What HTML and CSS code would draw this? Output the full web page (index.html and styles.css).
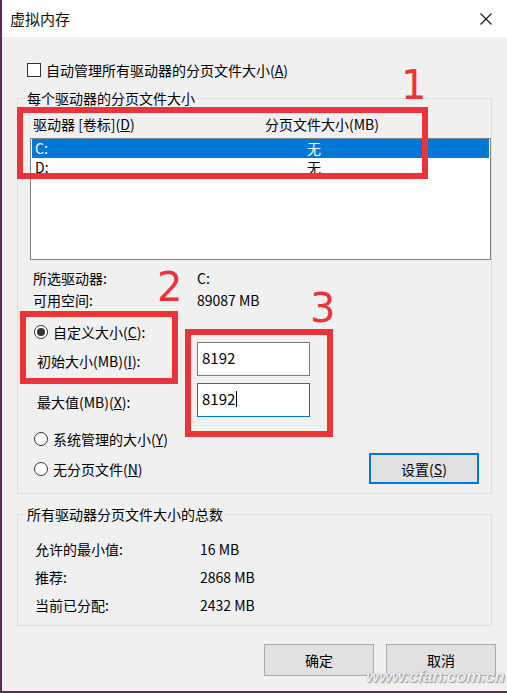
FILE: index.html
```html
<!DOCTYPE html>
<html lang="zh-CN">
<head>
    <meta charset="UTF-8">
    <meta name="viewport" content="width=device-width, initial-scale=1.0">
    <title>虚拟内存</title>
    <link rel="stylesheet" href="styles.css">
</head>
<body>
    <div class="window">
        <div class="titlebar">
            <span class="title">虚拟内存</span>
            <svg class="close" width="12" height="12" viewBox="0 0 12 12">
                <path d="M0.5 0.5 L11.5 11.5 M11.5 0.5 L0.5 11.5" stroke="#111" stroke-width="1.1" fill="none"/>
            </svg>
        </div>

        <label class="check-row"><span class="checkbox"></span>自动管理所有驱动器的分页文件大小(<u>A</u>)</label>

        <fieldset class="group">
            <legend>每个驱动器的分页文件大小</legend>
            <div class="group-inner drives-inner">
                <div class="list-head">
                    <span class="head-drive">驱动器 [卷标](<u>D</u>)</span>
                    <span>分页文件大小(MB)</span>
                </div>
                <div class="listbox">
                    <div class="list-row selected"><span class="row-drive">C:</span><span>无</span></div>
                    <div class="list-row"><span class="row-drive">D:</span><span>无</span></div>
                </div>

                <div class="drive-info">
                    <div class="info-row"><span class="info-label">所选驱动器:</span><span>C:</span></div>
                    <div class="info-row"><span class="info-label">可用空间:</span><span>89087 MB</span></div>
                </div>

                <div class="radio-row first-radio"><span class="radio checked"></span>自定义大小(<u>C</u>):</div>
                <div class="size-grid">
                    <span class="size-label">初始大小(MB)(<u>I</u>):</span>
                    <div class="textbox">8192</div>
                    <span class="size-label">最大值(MB)(<u>X</u>):</span>
                    <div class="textbox focused">8192<span class="caret"></span></div>
                </div>
                <div class="radio-row system-radio"><span class="radio"></span>系统管理的大小(<u>Y</u>)</div>
                <div class="last-row">
                    <div class="radio-row"><span class="radio"></span>无分页文件(<u>N</u>)</div>
                    <button class="btn btn-set">设置(<u>S</u>)</button>
                </div>
            </div>
        </fieldset>

        <fieldset class="group totals">
            <legend>所有驱动器分页文件大小的总数</legend>
            <div class="group-inner totals-inner">
                <div class="total-row"><span class="total-label">允许的最小值:</span><span>16 MB</span></div>
                <div class="total-row"><span class="total-label">推荐:</span><span>2868 MB</span></div>
                <div class="total-row"><span class="total-label">当前已分配:</span><span>2432 MB</span></div>
            </div>
        </fieldset>

        <div class="dialog-buttons">
            <button class="btn">确定</button>
            <button class="btn">取消</button>
        </div>
    </div>

    <!-- annotations drawn over the screenshot -->
    <div class="mark mark-1"></div>
    <div class="mark mark-2"></div>
    <div class="mark mark-3"></div>
    <span class="mark-num num-1">1</span>
    <span class="mark-num num-2">2</span>
    <span class="mark-num num-3">3</span>
    <span class="watermark">www.cfan.com.cn</span>
</body>
</html>
```

FILE: styles.css
```css
body {
    margin: 0;
    position: relative;
    width: 507px;
    height: 693px;
    overflow: hidden;
    font-family: "Noto Sans CJK SC", "Noto Sans", sans-serif;
    font-size: 14px;
    color: #000000;
}

.window {
    box-sizing: border-box;
    width: 507px;
    height: 693px;
    background-color: #f0f0f0;
    border-left: 2px solid #5b2b5c;
    border-bottom: 2px solid #5b2b5c;
}

.titlebar {
    height: 37px;
    background-color: #ffffff;
    display: flex;
    align-items: center;
    justify-content: space-between;
    padding: 0 15px 0 8px;
}

.title {
    font-size: 15px;
    line-height: 20px;
    color: #111111;
}

u {
    text-underline-offset: 1px;
}

.check-row {
    display: flex;
    align-items: center;
    height: 20px;
    line-height: 20px;
    margin: 23px 0 0 25px;
}

.checkbox {
    box-sizing: border-box;
    width: 14px;
    height: 14px;
    border: 1px solid #333333;
    background-color: #ffffff;
    margin-right: 5px;
}

.group {
    box-sizing: border-box;
    width: 475px;
    min-width: 0;
    margin: 9px 0 0 15px;
    padding: 0;
    border: 1px solid #dcdcdc;
}

.group legend {
    margin-left: 7px;
    padding: 0 2px;
    line-height: 18px;
}

.drives-inner {
    padding: 7px 0 9px 12px;
}

.list-head {
    display: flex;
    height: 20px;
    line-height: 20px;
    padding-left: 3px;
    margin-bottom: 4px;
}

.head-drive {
    width: 232px;
}

.listbox {
    box-sizing: border-box;
    height: 122px;
    border: 1px solid #828282;
    background-color: #ffffff;
    padding: 0 1px;
}

.list-row {
    display: flex;
    height: 19px;
    line-height: 19px;
    padding-left: 3px;
}

.list-row.selected {
    background-color: #0078d7;
    color: #ffffff;
}

.row-drive {
    width: 272px;
}

.drive-info {
    margin-top: 7px;
    padding-left: 3px;
}

.info-row {
    display: flex;
    height: 22px;
    line-height: 22px;
}

.info-label {
    width: 164px;
}

.radio-row {
    display: flex;
    align-items: center;
    height: 20px;
    line-height: 20px;
    padding-left: 4px;
}

.first-radio {
    margin-top: 11px;
}

.system-radio {
    margin-top: 12px;
}

.radio {
    box-sizing: border-box;
    width: 14px;
    height: 14px;
    border: 1px solid #333333;
    border-radius: 50%;
    background-color: #ffffff;
    margin-right: 5px;
    display: flex;
    align-items: center;
    justify-content: center;
}

.radio.checked::after {
    content: "";
    width: 8px;
    height: 8px;
    border-radius: 50%;
    background-color: #333333;
}

.size-grid {
    display: grid;
    grid-template-columns: 160px 113px;
    row-gap: 7px;
    align-items: center;
    padding-left: 7px;
}

.size-label {
    line-height: 20px;
    padding-top: 4px;
}

.textbox {
    box-sizing: border-box;
    height: 34px;
    border: 1px solid #7a7a7a;
    background-color: #ffffff;
    padding: 0 0 2px 4px;
    font-size: 15px;
    line-height: 30px;
    display: flex;
    align-items: center;
}

.textbox.focused {
    border-color: #0078d7;
}

.caret {
    display: inline-block;
    width: 1px;
    height: 16px;
    background-color: #000000;
    margin-left: 1px;
}

.last-row {
    display: flex;
    align-items: center;
    justify-content: space-between;
    margin: 4px 12px 0 0;
    height: 31px;
}

.btn {
    box-sizing: border-box;
    width: 110px;
    height: 32px;
    border: 1px solid #adadad;
    background-color: #e1e1e1;
    font-family: inherit;
    font-size: 14px;
    color: #000000;
    padding: 0;
}

.btn-set {
    height: 31px;
    border: 2px solid #0078d7;
}

.totals {
    margin-top: 11px;
}

.totals-inner {
    padding: 12px 0 6px 17px;
}

.total-row {
    display: flex;
    height: 28px;
    line-height: 28px;
}

.total-label {
    width: 165px;
}

.dialog-buttons {
    display: flex;
    justify-content: flex-end;
    gap: 12px;
    margin: 18px 11px 0 0;
}

.mark {
    position: absolute;
    box-sizing: border-box;
    border: 6px solid #ea3439;
}

.mark-1 {
    left: 17px;
    top: 107px;
    width: 411px;
    height: 72px;
}

.mark-2 {
    left: 20px;
    top: 311px;
    width: 158px;
    height: 73px;
}

.mark-3 {
    left: 185px;
    top: 329px;
    width: 148px;
    height: 108px;
}

.mark-num {
    position: absolute;
    font-family: "DejaVu Sans", sans-serif;
    font-size: 40px;
    line-height: 40px;
    color: #ea3439;
}

.num-1 {
    left: 401px;
    top: 65px;
}

.num-2 {
    left: 157px;
    top: 267px;
}

.num-3 {
    left: 310px;
    top: 288px;
}

.watermark {
    position: absolute;
    left: 366px;
    top: 670px;
    font-family: "Liberation Sans", sans-serif;
    font-size: 17px;
    line-height: 14px;
    font-weight: bold;
    font-style: italic;
    letter-spacing: -0.3px;
    color: rgba(255, 255, 255, 0.85);
    text-shadow: 0 0 1px #8a8a8a, 1px 1px 1px #9a9a9a;
}
```
